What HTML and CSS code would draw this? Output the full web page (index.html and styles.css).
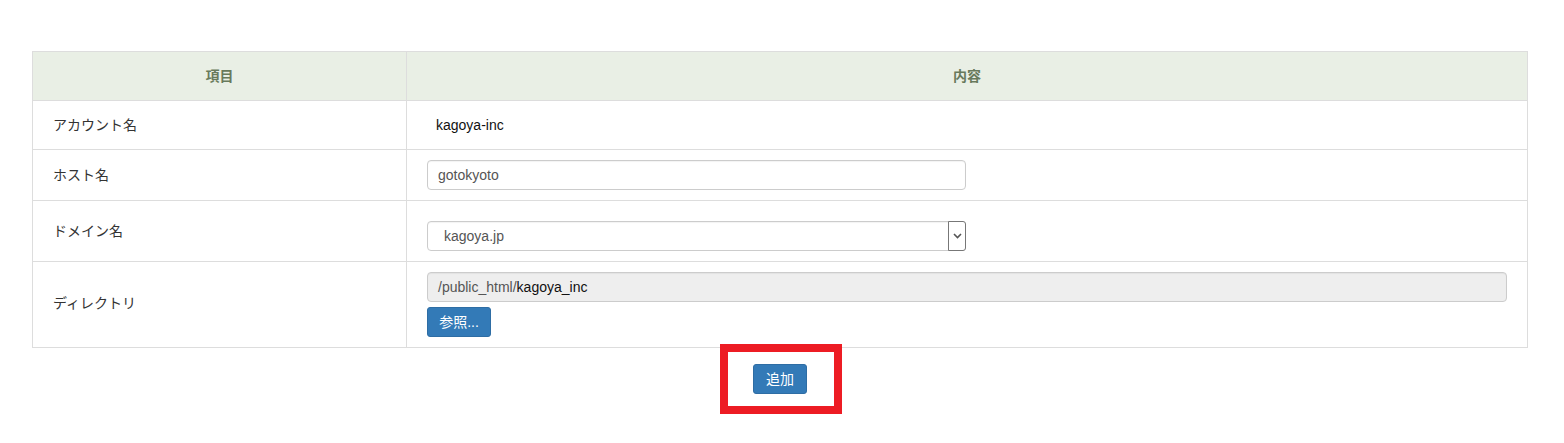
FILE: index.html
```html
<!DOCTYPE html>
<html lang="ja">
<head>
<meta charset="utf-8">
<title>サブドメイン追加</title>
<link rel="stylesheet" href="styles.css">
</head>
<body>
<div class="page">
  <table class="form-table">
    <thead>
      <tr class="head-row">
        <th class="col-item">項目</th>
        <th class="col-content">内容</th>
      </tr>
    </thead>
    <tbody>
      <tr class="row-text">
        <td class="label">アカウント名</td>
        <td class="value"><span class="plain">kagoya-inc</span></td>
      </tr>
      <tr>
        <td class="label">ホスト名</td>
        <td class="value"><div class="field field-short">gotokyoto</div></td>
      </tr>
      <tr>
        <td class="label">ドメイン名</td>
        <td class="value value-select">
          <div class="field field-short select">
            <span class="select-text">kagoya.jp</span>
            <span class="select-arrow">
              <svg width="9" height="6" viewBox="0 0 9 6"><path d="M1 1 L4.5 4.5 L8 1" fill="none" stroke="#555" stroke-width="1.6"/></svg>
            </span>
          </div>
        </td>
      </tr>
      <tr>
        <td class="label label-dir">ディレクトリ</td>
        <td class="value">
          <div class="field field-disabled"><span class="prefix">/public_html/</span>kagoya_inc</div>
          <button class="btn btn-browse" type="button">参照...</button>
        </td>
      </tr>
    </tbody>
  </table>
  <div class="actions">
    <div class="highlight">
      <button class="btn btn-add" type="button">追加</button>
    </div>
  </div>
</div>
</body>
</html>
```
FILE: styles.css
```css
* { box-sizing: border-box; }
html, body { min-height: 443px; }
body {
  margin: 0;
  background: #fff;
  font-family: "Liberation Sans", "Noto Sans CJK JP", sans-serif;
  font-size: 14px;
  color: #333;
}
.page {
  padding: 51px 0 40px 32px;
  min-height: 443px;
}
.form-table {
  width: 1496px;
  border-collapse: collapse;
  border: 1px solid #ddd;
}
.form-table th,
.form-table td {
  border: 1px solid #ddd;
  line-height: 20px;
}
.head-row th {
  height: 49px;
  background: #e9efe5;
  color: #687a5c;
  font-weight: bold;
  text-align: center;
  padding: 0;
}
.col-item { width: 374px; }
.label {
  padding: 10px 20px;
  vertical-align: middle;
  color: #333;
}
.label-dir { padding-bottom: 14px; }
.value {
  padding: 10px 20px;
  vertical-align: middle;
}
.row-text td { height: 49px; }
.plain {
  padding-left: 9px;
  color: #111;
}
.field {
  height: 30px;
  border: 1px solid #ccc;
  border-radius: 4px;
  padding: 4px 10px;
  line-height: 20px;
  color: #555;
  background: #fff;
  box-shadow: inset 0 1px 1px rgba(0,0,0,0.05);
}
.field-short { width: 539px; }
.value-select { padding-top: 20px; }
.select {
  display: flex;
  align-items: center;
  justify-content: space-between;
  padding: 0 0 0 16px;
  position: relative;
}
.select-arrow {
  width: 18px;
  height: 30px;
  margin: -1px -1px -1px 0;
  border: 1px solid #777;
  border-radius: 0 3px 3px 0;
  display: flex;
  align-items: center;
  justify-content: center;
  background: #fff;
}
.field-disabled {
  width: 1080px;
  background: #eee;
  color: #111;
}
.prefix { color: #555; }
.btn {
  display: inline-block;
  font-family: inherit;
  font-size: 14px;
  line-height: 20px;
  color: #fff;
  background: #337ab7;
  border: 1px solid #2e6da4;
  border-radius: 3px;
  padding: 4px 12px;
  cursor: pointer;
}
.btn-browse {
  margin-top: 5px;
  width: 64px;
  padding: 4px 0;
  text-align: center;
}
.actions {
  width: 1496px;
  display: flex;
  justify-content: center;
  padding-top: 16px;
  padding-bottom: 30px;
}
.highlight {
  position: relative;
}
.highlight::after {
  content: "";
  position: absolute;
  left: -33px;
  right: -35px;
  top: -20px;
  bottom: -20px;
  border: 8px solid #ed1c24;
  pointer-events: none;
}
.btn-add {
  width: 54px;
  height: 30px;
  padding: 0;
  text-align: center;
  display: block;
}
```
